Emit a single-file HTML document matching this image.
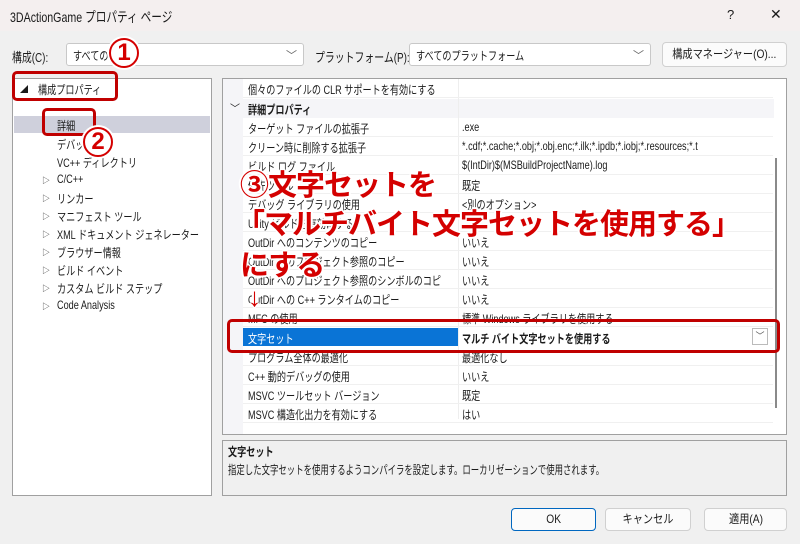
<!DOCTYPE html>
<html><head><meta charset="utf-8"><style>
*{margin:0;padding:0;box-sizing:border-box}
body{width:800px;height:544px;background:#f0f0f0;font-family:"Liberation Sans","Noto Sans CJK JP",sans-serif;font-size:12px;color:#1a1a1a;position:relative;overflow:hidden}
.a{position:absolute;white-space:nowrap}
.t{position:absolute;white-space:nowrap;transform:scaleX(.76);transform-origin:0 0}
.cb{position:absolute;background:#fff;border:1px solid #c8c8c8;border-radius:3px;height:23px}
.cb .t{left:6px;top:3px}
.chev{position:absolute;right:6px;top:3px;color:#666;font-size:11px}
.btn{position:absolute;background:#fbfbfb;border:1px solid #d0d0d0;border-radius:4px;height:23px;text-align:center;line-height:21px}
.btn span{display:inline-block;transform:scaleX(.85)}
.row{position:absolute;left:243px;width:530px;height:19px;border-bottom:1px solid #f0f0f0}
.row span{position:absolute;top:2px;left:5px;white-space:nowrap;transform:scaleX(.76);transform-origin:0 0}
.row span.v{left:219px}
.tri{position:absolute;left:42px;font-size:8px;color:#333}
.red{position:absolute;border:3px solid #c00000;border-radius:5px}
.ann{position:absolute;color:#d40000;font-weight:bold;text-shadow:2px 0 #fff,-2px 0 #fff,0 2px #fff,0 -2px #fff,1px 1px #fff,-1px -1px #fff,1px -1px #fff,-1px 1px #fff;white-space:nowrap;letter-spacing:-1px}
.circ{position:absolute;width:30px;height:30px;border-radius:50%;border:2.5px solid #d40000;background:#fff;color:#d40000;font-size:24px;font-weight:bold;text-align:center;line-height:25px;box-shadow:0 0 0 2px #fff}
</style></head><body>
<div class="a" style="left:0;top:0;width:800px;height:31px;background:#f4efef"></div>
<div class="t" style="left:10px;top:7px;font-size:14px">3DActionGame プロパティ ページ</div>
<div class="a" style="left:727px;top:7px;font-size:13px">?</div>
<div class="a" style="left:770px;top:6px;font-size:14px">✕</div>

<div class="t" style="left:12px;top:47px;font-size:13px">構成(C):</div>
<div class="cb" style="left:66px;top:43px;width:238px"><span class="t">すべての構成</span><span class="chev">﹀</span></div>
<div class="t" style="left:315px;top:47px;font-size:13px">プラットフォーム(P):</div>
<div class="cb" style="left:409px;top:43px;width:242px"><span class="t">すべてのプラットフォーム</span><span class="chev">﹀</span></div>
<div class="btn" style="left:662px;top:42px;width:125px;height:25px;line-height:23px"><span>構成マネージャー(O)...</span></div>

<div class="a" style="left:12px;top:78px;width:200px;height:418px;background:#fff;border:1px solid #a0a0a0"></div>
<div class="a" style="left:20px;top:84px;font-size:8px">◢</div>
<div class="t" style="left:38px;top:81px">構成プロパティ</div>
<div class="a" style="left:14px;top:116px;width:196px;height:17px;background:#cfd0dc"></div>
<div class="t" style="left:57px;top:117px">詳細</div>
<div class="t" style="left:57px;top:136px">デバッグ</div>
<div class="t" style="left:57px;top:154px">VC++ ディレクトリ</div>
<div class="tri" style="top:175px">▷</div><div class="t" style="left:57px;top:172px">C/C++</div>
<div class="tri" style="top:193px">▷</div><div class="t" style="left:57px;top:190px">リンカー</div>
<div class="tri" style="top:211px">▷</div><div class="t" style="left:57px;top:208px">マニフェスト ツール</div>
<div class="tri" style="top:229px">▷</div><div class="t" style="left:57px;top:226px">XML ドキュメント ジェネレーター</div>
<div class="tri" style="top:247px">▷</div><div class="t" style="left:57px;top:244px">ブラウザー情報</div>
<div class="tri" style="top:265px">▷</div><div class="t" style="left:57px;top:262px">ビルド イベント</div>
<div class="tri" style="top:283px">▷</div><div class="t" style="left:57px;top:280px">カスタム ビルド ステップ</div>
<div class="tri" style="top:301px">▷</div><div class="t" style="left:57px;top:298px">Code Analysis</div>

<div class="a" style="left:222px;top:78px;width:565px;height:357px;background:#fff;border:1px solid #a0a0a0"></div>
<div class="a" style="left:223px;top:79px;width:20px;height:355px;background:#f5f5f8"></div>
<div class="a" style="left:243px;top:99px;width:531px;height:19px;background:#f5f5f8"></div>
<div class="a" style="left:775px;top:158px;width:2px;height:250px;background:#8a8a8a"></div>
<div class="a" style="left:458px;top:79px;width:1px;height:340px;background:#eee"></div>

<div class="row" style="top:79px"><span>個々のファイルの CLR サポートを有効にする</span></div>
<div class="a" style="left:230px;top:100px;font-size:10px">﹀</div>
<div class="t" style="left:248px;top:101px;font-weight:bold">詳細プロパティ</div>
<div class="row" style="top:118px"><span>ターゲット ファイルの拡張子</span><span class="v">.exe</span></div>
<div class="row" style="top:137px"><span>クリーン時に削除する拡張子</span><span class="v">*.cdf;*.cache;*.obj;*.obj.enc;*.ilk;*.ipdb;*.iobj;*.resources;*.t</span></div>
<div class="row" style="top:156px"><span>ビルド ログ ファイル</span><span class="v">$(IntDir)$(MSBuildProjectName).log</span></div>
<div class="row" style="top:175px"><span>優先ツール</span><span class="v">既定</span></div>
<div class="row" style="top:194px"><span>デバッグ ライブラリの使用</span><span class="v">&lt;別のオプション&gt;</span></div>
<div class="row" style="top:213px"><span>Unity ビルドを有効にする</span></div>
<div class="row" style="top:232px"><span>OutDir へのコンテンツのコピー</span><span class="v">いいえ</span></div>
<div class="row" style="top:251px"><span>OutDir へのプロジェクト参照のコピー</span><span class="v">いいえ</span></div>
<div class="row" style="top:270px"><span>OutDir へのプロジェクト参照のシンボルのコピ</span><span class="v">いいえ</span></div>
<div class="row" style="top:289px"><span>OutDir への C++ ランタイムのコピー</span><span class="v">いいえ</span></div>
<div class="row" style="top:308px"><span>MFC の使用</span><span class="v">標準 Windows ライブラリを使用する</span></div>
<div class="a" style="left:243px;top:328px;width:215px;height:18px;background:#0a74d6"></div>
<div class="t" style="left:248px;top:330px;color:#fff">文字セット</div>
<div class="t" style="left:462px;top:330px;font-weight:bold">マルチ バイト文字セットを使用する</div>
<div class="a" style="left:752px;top:328px;width:16px;height:17px;border:1px solid #bbb;font-size:9px;text-align:center;line-height:15px;color:#555">﹀</div>
<div class="row" style="top:347px"><span>プログラム全体の最適化</span><span class="v">最適化なし</span></div>
<div class="row" style="top:366px"><span>C++ 動的デバッグの使用</span><span class="v">いいえ</span></div>
<div class="row" style="top:385px"><span>MSVC ツールセット バージョン</span><span class="v">既定</span></div>
<div class="row" style="top:404px"><span>MSVC 構造化出力を有効にする</span><span class="v">はい</span></div>

<div class="a" style="left:222px;top:440px;width:565px;height:56px;border:1px solid #a0a0a0"></div>
<div class="t" style="left:228px;top:443px;font-weight:bold">文字セット</div>
<div class="t" style="left:228px;top:461px;transform:scaleX(.7)">指定した文字セットを使用するようコンパイラを設定します。ローカリゼーションで使用されます。</div>

<div class="btn" style="left:511px;top:508px;width:85px;border:1px solid #0067c0"><span>OK</span></div>
<div class="btn" style="left:605px;top:508px;width:86px"><span>キャンセル</span></div>
<div class="btn" style="left:704px;top:508px;width:83px"><span>適用(A)</span></div>

<div class="red" style="left:12px;top:71px;width:106px;height:30px"></div>
<div class="red" style="left:42px;top:108px;width:54px;height:28px"></div>
<div class="red" style="left:227px;top:319px;width:553px;height:34px"></div>
<div class="circ" style="left:109px;top:38px">1</div>
<div class="circ" style="left:83px;top:127px">2</div>
<div class="ann" style="left:240px;top:162px;font-size:29px">③文字セットを</div>
<div class="ann" style="left:236px;top:201px;font-size:29px">「マルチバイト文字セットを使用する」</div>
<div class="ann" style="left:240px;top:242px;font-size:29px">にする</div>
<div class="ann" style="left:248px;top:282px;font-size:26px;font-weight:normal">↓</div>
</body></html>
